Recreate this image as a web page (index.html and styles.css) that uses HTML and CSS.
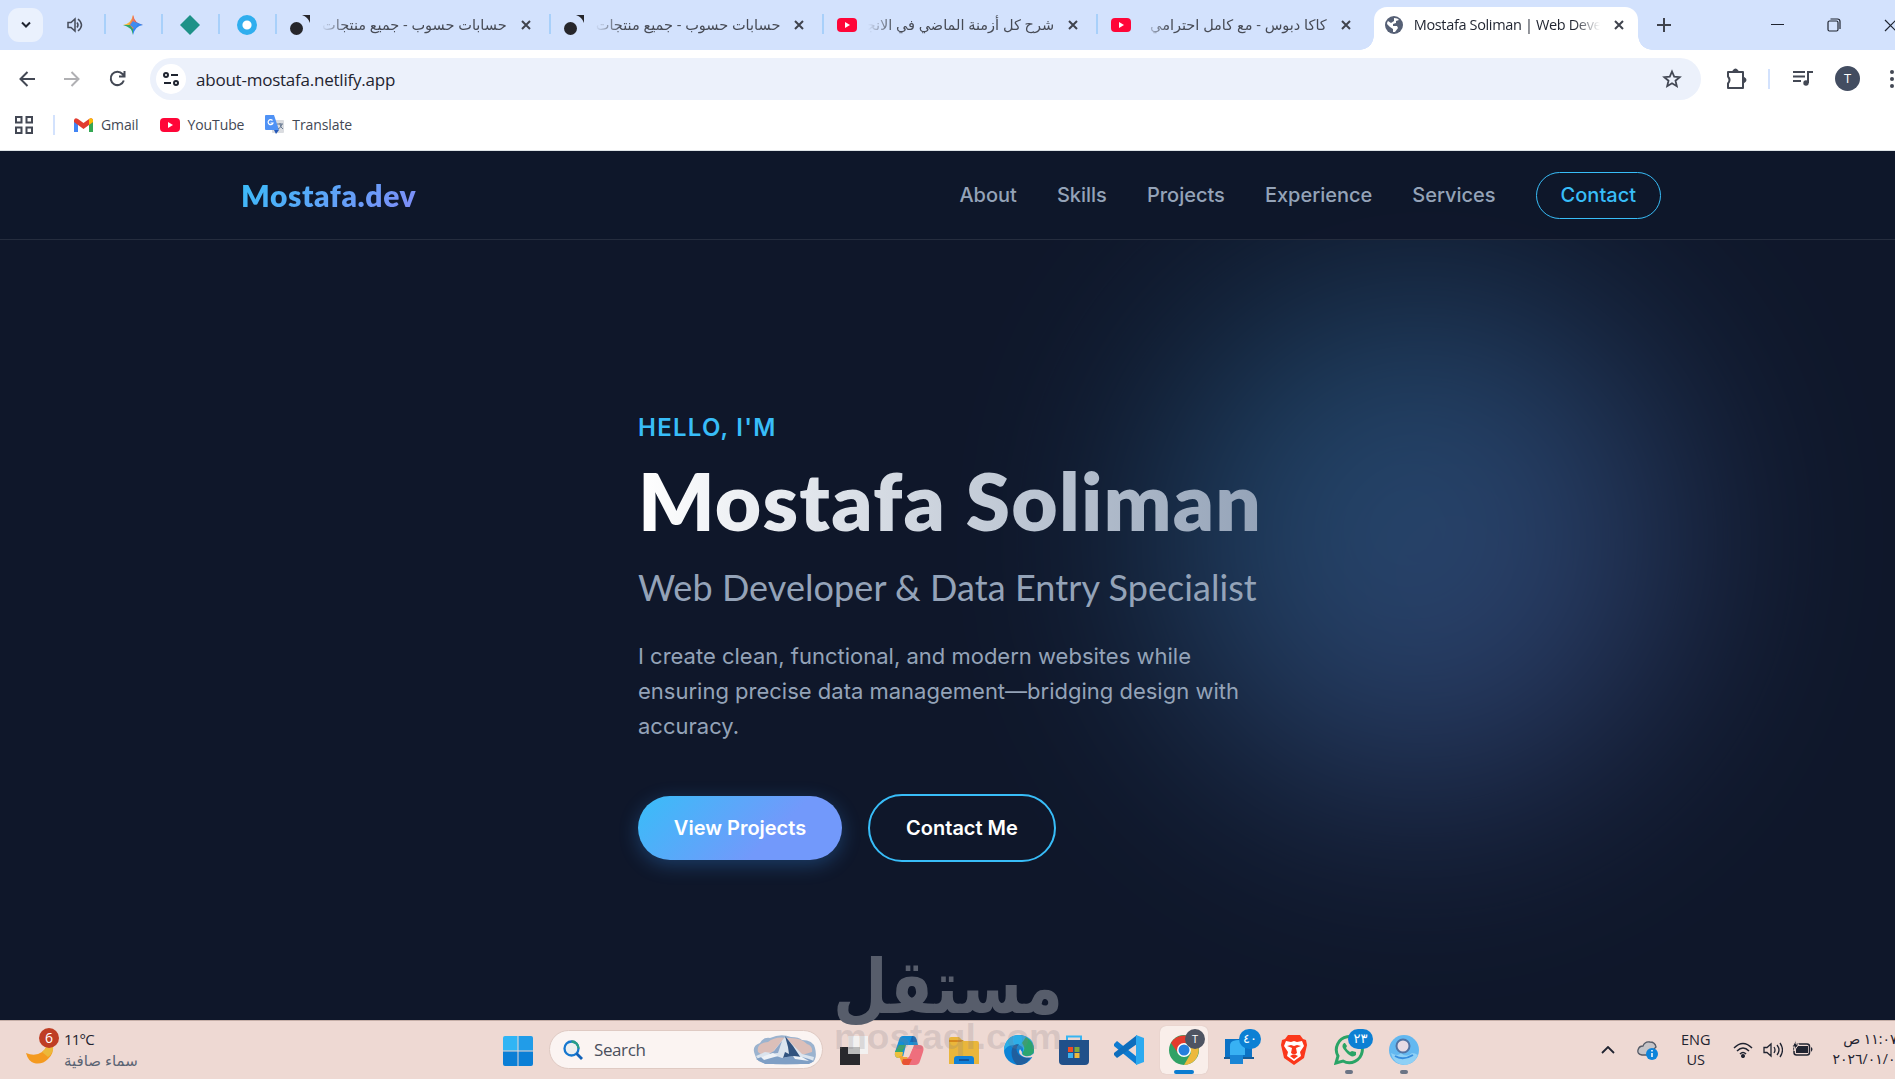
FILE: index.html
```html
<!DOCTYPE html>
<html lang="en">
<head>
    <meta charset="UTF-8">
    <meta name="viewport" content="width=device-width, initial-scale=1.0">
    <title>Mostafa Soliman | Web Developer</title>
    <link rel="stylesheet" href="styles.css">
</head>
<body>

    <!-- Tab strip -->
    <div class="tabs">
        <div class="tab-search"><svg width="12" height="8" viewBox="0 0 12 8"><path d="M2 1.5l4 4 4-4" fill="none" stroke="#1f2430" stroke-width="2"/></svg></div>
        <div class="pinned">
            <svg width="16" height="16" viewBox="0 0 16 16" fill="none" stroke="#474d5b" stroke-width="1.5"><path d="M1 5.5h3l4-3.5v12L4 10.500H1z"/><path d="M10 5.500q2 2.500 0 5M11 2q7 6 0 12"/></svg>
        </div>
        <div class="pinned">
            <svg width="20" height="20" viewBox="0 0 20 20"><path d="M10 0Q11 8 10 10L0 10Q8 9 10 0" fill="#f6b93b"/><path d="M10 0Q12 9 20 10H10z" fill="#ec5a4d"/><path d="M20 10Q12 11 10 20V6z" fill="#3285f0"/><path d="M0 10Q9 12 10 20V10z" fill="#31a66a"/><path d="M10 0Q11 7 14 9l-4 5-4-5q3-2 4-9" fill="#ec7b5c"/><path d="M7 10l3-4 5 3-3 5z" fill="#3f8df0"/></svg>
        </div>
        <div class="pinned">
            <svg width="20" height="20" viewBox="0 0 20 20"><path d="M10 0l10 10-10 10L0 10z" fill="#1e9188"/></svg>
        </div>
        <div class="pinned">
            <svg width="20" height="20" viewBox="0 0 20 20"><circle cx="10" cy="10" r="7.300" fill="#fff" stroke="#30aeee" stroke-width="5.400"/></svg>
        </div>
        <div class="tab">
            <svg class="favicon" width="20" height="20" viewBox="0 0 20 20" fill="#26262b"><circle cx="6.500" cy="13.500" r="6.500"/><path d="M12 0h8v8q-2-6-8-8z"/></svg>
            <span class="tab-title" dir="rtl">حسابات حسوب - جميع منتجات حسوب</span>
            <svg class="close" width="10" height="10" viewBox="0 0 10 10"><path d="M1 1l8 8M9 1L1 9"/></svg>
        </div>
        <div class="tab">
            <svg class="favicon" width="20" height="20" viewBox="0 0 20 20" fill="#26262b"><circle cx="6.500" cy="13.500" r="6.500"/><path d="M12 0h8v8q-2-6-8-8z"/></svg>
            <span class="tab-title" dir="rtl">حسابات حسوب - جميع منتجات حسوب</span>
            <svg class="close" width="10" height="10" viewBox="0 0 10 10"><path d="M1 1l8 8M9 1L1 9"/></svg>
        </div>
        <div class="tab">
            <svg class="favicon" width="20" height="20" viewBox="0 0 20 20"><rect y="3" width="20" height="14" rx="4" fill="#ff0638"/><path d="M8 7l5 3-5 3z" fill="#fff"/></svg>
            <span class="tab-title" dir="rtl">شرح كل أزمنة الماضي في الانجليزي</span>
            <svg class="close" width="10" height="10" viewBox="0 0 10 10"><path d="M1 1l8 8M9 1L1 9"/></svg>
        </div>
        <div class="tab">
            <svg class="favicon" width="20" height="20" viewBox="0 0 20 20"><rect y="3" width="20" height="14" rx="4" fill="#ff0638"/><path d="M8 7l5 3-5 3z" fill="#fff"/></svg>
            <span class="tab-title" dir="rtl">كاكا دبوس - مع كامل احترامي</span>
            <svg class="close" width="10" height="10" viewBox="0 0 10 10"><path d="M1 1l8 8M9 1L1 9"/></svg>
        </div>
        <div class="tab active">
            <svg class="favicon" width="18" height="18" viewBox="0 0 18 18"><circle cx="9" cy="9" r="9" fill="#566075"/><path d="M9 2q4 0 5 2l-3 1v2l-3 1v2h4l1 2-3 4H8v-3L5 11 2 8q0-2 1-3l3 2 3-2z" fill="#fff"/></svg>
            <span class="tab-title">Mostafa Soliman | Web Developer</span>
            <svg class="close" width="10" height="10" viewBox="0 0 10 10"><path d="M1 1l8 8M9 1L1 9"/></svg>
        </div>
        <div class="window-buttons">
            <svg width="14" height="14" viewBox="0 0 14 14" fill="none" stroke="#3f434d" stroke-width="2"><path d="M7 0v14M0 7h14"/></svg>
            <svg width="13" height="13" viewBox="0 0 13 13" fill="none" stroke="#1f2430"><path d="M0 5.500h13"/></svg>
            <svg width="14" height="14" viewBox="0 0 14 14" fill="none" stroke="#1f2430" stroke-width="1.200"><rect x="1" y="3" width="10" height="10" rx="1.500"/><path d="M3.500 1h7q2.500 0 2.500 2.500V11"/></svg>
            <svg width="13" height="13" viewBox="0 0 13 13" fill="none" stroke="#1f2430" stroke-width="1.200"><path d="M1 1l11 11M12 1L1 12"/></svg>
        </div>
    </div>

    <!-- Toolbar -->
    <div class="toolbar">
        <div class="nav-icons">
            <svg width="16" height="16" viewBox="0 0 16 16" fill="none" stroke="#434854" stroke-width="2"><path d="M16 8H2M8.500 1L1.500 8l7 7"/></svg>
            <svg width="16" height="16" viewBox="0 0 16 16" fill="none" stroke="#b0b0b3" stroke-width="2"><path d="M0 8h14M7.500 1l7 7-7 7"/></svg>
            <svg width="17" height="17" viewBox="0 0 17 17" fill="none" stroke="#434854" stroke-width="2"><path d="M14.800 10.500A6.700 6.700 0 1 1 13.500 4L15.500 6M15.500 1v5.500H10"/></svg>
        </div>
        <div class="address">
            <div class="site-info">
                <svg width="16" height="14" viewBox="0 0 16 14" fill="none" stroke="#1f2430" stroke-width="2"><circle cx="3" cy="3" r="2"/><path d="M8 3h7M1 11h7"/><circle cx="13" cy="11" r="2"/></svg>
            </div>
            <span class="url">about-mostafa.netlify.app</span>
            <svg class="star" width="20" height="20" viewBox="0 0 20 20" fill="none" stroke="#434854" stroke-width="1.800"><path d="M10 2.500l2.200 5.100 5.500.5-4.200 3.600 1.300 5.500L10 14.300l-4.800 2.900 1.300-5.500L2.300 8.100l5.500-.5z"/></svg>
        </div>
        <div class="toolbar-right">
            <svg width="22" height="22" viewBox="0 0 22 22" fill="none" stroke="#434854" stroke-width="2"><path d="M3 4h15v16H3v-4.500q3-3.500 0-7z" stroke-linejoin="round"/><path d="M8.500 3q2-3 4 0zM19 10q3 2 0 4z" fill="#434854"/></svg>
            <span class="divider"></span>
            <svg width="20" height="20" viewBox="0 0 20 20" fill="none" stroke="#434854" stroke-width="2"><path d="M0 3h12M0 7.500h12M0 12h8M15 14V3h5"/><circle cx="13" cy="14" r="2.700" fill="#434854" stroke="none"/></svg>
            <span class="avatar">T</span>
            <svg width="4" height="18" viewBox="0 0 4 18" fill="#434854"><circle cx="2" cy="2" r="2"/><circle cx="2" cy="9" r="2"/><circle cx="2" cy="16" r="2"/></svg>
        </div>
    </div>

    <!-- Bookmarks bar -->
    <div class="bookmarks">
        <svg width="18" height="18" viewBox="0 0 18 18" fill="none" stroke="#434854" stroke-width="2"><path d="M1 1h5.500v5.500H1zM11.500 1H17v5.500h-5.500zM1 11.500h5.500V17H1zM11.500 11.500H17V17h-5.500z"/></svg>
        <span class="divider"></span>
        <span class="bookmark gmail">
            <svg width="19" height="14" viewBox="0 0 19 14"><path d="M0 2v12h4V5z" fill="#4285f4"/><path d="M19 2v12h-4V5z" fill="#34a853"/><path d="M0 2q1-3 4-1l5.500 4L15 1q3-2 4 1v2l-9.500 7L0 4z" fill="#e23c30"/><path d="M15 1q3-2 4 1v2l-4 3z" fill="#fbbc04"/></svg>
            Gmail
        </span>
        <span class="bookmark youtube">
            <svg width="20" height="14" viewBox="0 0 20 14"><rect width="20" height="14" rx="4" fill="#ff0638"/><path d="M8 4l5 3-5 3z" fill="#fff"/></svg>
            YouTube
        </span>
        <span class="bookmark">
            <svg width="19" height="19" viewBox="0 0 19 19"><rect x="7" y="5" width="12" height="13" rx="1" fill="#dadce0"/><path d="M1 0h8l5 15H1q-1 0-1-1V1q0-1 1-1z" fill="#4f92f5"/><path d="M9 15h5l-3 4z" fill="#2458b8"/><path d="M7.500 5.500a2.500 2.500 0 1 0 .5 2.500H5.500" fill="none" stroke="#fff" stroke-width="1.200"/><path d="M12 9h6M15 8v1q0 3 3 5M17 9q-1 4-4 5" fill="none" stroke="#697a92" stroke-width="1"/></svg>
            Translate
        </span>
    </div>

    <!-- Website -->
    <div class="page">
        <div class="glow"></div>
        <nav class="navbar">
            <a class="logo">Mostafa.dev</a>
            <div class="nav-links">
                <a>About</a>
                <a>Skills</a>
                <a>Projects</a>
                <a>Experience</a>
                <a>Services</a>
                <a class="nav-contact">Contact</a>
            </div>
        </nav>
        <section class="hero">
            <p class="greeting">HELLO, I'M</p>
            <h1>Mostafa Soliman</h1>
            <h2>Web Developer &amp; Data Entry Specialist</h2>
            <p class="intro">I create clean, functional, and modern websites while ensuring precise data management—bridging design with accuracy.</p>
            <div class="hero-buttons">
                <a class="btn btn-primary">View Projects</a>
                <a class="btn btn-outline">Contact Me</a>
            </div>
        </section>
    </div>

    <!-- Taskbar -->
    <div class="taskbar">
        <div class="weather">
            <div class="moon">
                <svg width="28" height="20" viewBox="0 0 28 20"><path d="M0 8Q9 12 16 7 20 4 21 0h6q1 9-5 14Q16 20 8 18 2 16 0 8z" fill="#f49a20"/><path d="M16 7q4-3 5-7h6q1 8-5 12z" fill="#ecb83a"/></svg>
                <span class="badge badge-red">6</span>
            </div>
            <div class="weather-text">
                <div class="temp">11°C</div>
                <div class="sky" dir="rtl">سماء صافية</div>
            </div>
        </div>

        <div class="apps">
            <svg class="start" width="30" height="30" viewBox="0 0 30 30"><path d="M0 2q0-2 2-2h12.500v14.500H0z" fill="#30b5f5"/><path d="M15.500 0H28q2 0 2 2v12.500H15.500z" fill="#219ce8"/><path d="M0 15.500h14.500V30H2q-2 0-2-2zM15.500 15.500H30V28q0 2-2 2H15.500z" fill="#0b7fd6"/></svg>
            <div class="search">
                <svg width="20" height="20" viewBox="0 0 20 20"><circle cx="8.500" cy="8.500" r="7" fill="#eceeef" stroke="#1677cf" stroke-width="2.300"/><path d="M8.500 1.500a7 7 0 0 1 7 7" fill="none" stroke="#279e85" stroke-width="2.300"/><path d="M13.500 13.500l5.500 5.500" stroke="#1160b7" stroke-width="2.800"/></svg>
                <span>Search</span>
                <svg class="mountain" width="64" height="30" viewBox="0 0 64 30"><path d="M2 20Q-2 11 7 8q3-6 10-5Q28-2 38 2q8 0 11 3 11 0 13 8 3 12-4 15-28 3-45 0Q4 28 2 20z" fill="#9bb3cf"/><path d="M5 17Q3 8 15 7q7-6 19-4 14-1 20 6 6 2 5 8l-10 3H9z" fill="#dcbfb9"/><path d="M3 21l9-4 7 1 13-16 12 12 5 5 12 3-1 4q-25 4-54-1z" fill="#dbe4ee"/><path d="M32 1l3 11 1 7-4-2-2 6q9-3 18 0L40 11z" fill="#31537f"/><path d="M29 6l-8 10-5 3 9-1z" fill="#8da6c8"/><path d="M3 24q16-6 26-1 16-4 32 3l-5 3H12z" fill="#7f9fc5"/><path d="M8 22l12-4 5 3-14 4zM40 21l9 1 7 4-14-2z" fill="#eef2f7"/></svg>
            </div>
            <div class="app">
                <svg width="28" height="29" viewBox="0 0 28 29"><path d="M0 11h20v18H0z" fill="#29292d"/><path d="M8 0h20v18H8z" fill="#f3f3f3" opacity=".9"/><path d="M8 11h12v7H8z" fill="#bbb"/></svg>
            </div>
            <div class="app">
                <svg width="30" height="29" viewBox="0 0 30 29"><path d="M9 0h10q3 0 4 5l1 4h-8L9 22H5Q0 22 1 16L5 4Q6 0 9 0z" fill="#168ed6"/><path d="M5 9h7L8 16H1z" fill="#38a86b"/><path d="M1 16h8l-1 6H5q-5 0-4-6z" fill="#ecc03c"/><path d="M20 9h5q6 0 4 7l-3 9q-1 4-5 4H11q-3 0-4-7h7z" fill="#ee6f7d"/><path d="M5 20h9l-3 9q-3 0-4-4z" fill="#efa43a"/><path d="M12 9h8l-5 12H9z" fill="#eed7d0"/><path d="M18 0q4 0 5 6h-7z" fill="#1769b7"/><path d="M9 23h9l-3 6h-4q-3 0-3-3z" fill="#e85234"/></svg>
            </div>
            <div class="app">
                <svg width="30" height="27" viewBox="0 0 30 27"><path d="M0 2q0-2 2-2h8l4 4H28q2 0 2 2v21H0z" fill="#eab63b"/><path d="M0 5h12l3-2H0z" fill="#d7881c"/><path d="M5 27v-5q0-3 3-3h14q3 0 3 3v5z" fill="#1080d7"/><path d="M10 23h10" stroke="#10559c" stroke-width="2"/></svg>
            </div>
            <div class="app">
                <svg width="30" height="30" viewBox="0 0 30 30"><circle cx="15" cy="15" r="15" fill="#0c83d6"/><path d="M0 13Q3 0 15 0q15 1 15 14 0 5-5 7-6 1-7-2 4-9-6-9Q3 9 0 16z" fill="#2caee7"/><path d="M22 2q8 5 8 13 0 6-8 6-5-1-3-4 3-4-1-9z" fill="#2ca56e"/><path d="M8 14q1-5 7-5-5 5 0 11 5 4 12 2-5 9-14 8-7-7-5-16z" fill="#205f9e"/><path d="M16 14q-3 5 4 8 5 1 8 0l3 0v-4l-2 1q-3 3-8 2-4-1-3-4z" fill="#eed8d1"/></svg>
            </div>
            <div class="app">
                <svg width="30" height="30" viewBox="0 0 30 30"><path d="M8 5V1.500h14V5" fill="none" stroke="#38b5f2" stroke-width="2"/><path d="M0 5h30v21q0 4-4 4H4q-4 0-4-4z" fill="#20508a"/><path d="M9 12h5v5H9z" fill="#ee4d24"/><path d="M15.500 12h5v5h-5z" fill="#7ea93b"/><path d="M9 18h5v5H9z" fill="#3bb2ee"/><path d="M15.500 18h5v5h-5z" fill="#eeb93b"/></svg>
            </div>
            <div class="app">
                <svg width="30" height="30" viewBox="0 0 30 30"><path d="M0 9l3-3 20 16v8L0 11z" fill="#0d7bd1"/><path d="M0 20l3 3L23 9V0L0 18z" fill="#0d6ebd"/><path d="M22 0l8 3v24l-8 3z" fill="#2caaf0"/></svg>
            </div>
            <div class="app app-active">
                <svg width="30" height="30" viewBox="0 0 30 30"><circle cx="15" cy="15" r="15" fill="#30a265"/><path d="M2 8A15 15 0 0 1 28 8H15L9 18z" fill="#e43a2d"/><path d="M28 8a15 15 0 0 1-13 22l7-12-1-10z" fill="#ecb93d"/><circle cx="15" cy="15" r="7" fill="#fff"/><circle cx="15" cy="15" r="5.500" fill="#257fdd"/></svg>
                <span class="badge badge-grey">T</span>
                <span class="running running-active"></span>
            </div>
            <div class="app">
                <svg width="30" height="27" viewBox="0 0 30 27"><path d="M1 2h27v18H1z" fill="#0b72c5"/><path d="M0 20h30v2H0z" fill="#175b95"/><path d="M6 7h13v20H6z" fill="#1985d5"/><path d="M9 4q8-3 12 2v12H6V9q0-4 3-5z" fill="#38b1f3"/></svg>
                <span class="badge badge-blue">٤٠</span>
            </div>
            <div class="app">
                <svg width="26" height="30" viewBox="0 0 26 30"><path d="M7 0h12l3 4 3 1 1 5-3 13-10 7-10-7L0 10l1-5 3-1z" fill="#fb371b"/><path d="M5 6l5 1 3-1 3 1 5-1 2 5-4 6 1 4-7 5-7-5 1-4-4-6z" fill="#fff"/><path d="M6 11l5 2-1 5 3 2 3-2-1-5 5-2-4-1-3 1-3-1zM9 21l4-2 4 2-4 3z" fill="#fb371b"/></svg>
            </div>
            <div class="app">
                <svg width="30" height="30" viewBox="0 0 30 30"><path d="M2 28l2-7A13 13 0 1 1 9 26z" fill="none" stroke="#2aa466" stroke-width="3"/><path d="M10 8q-4 3 2 9 6 7 10 3v-3l-4-1-2 1q-3-2-4-4l1-2-2-3z" fill="#2aa466"/></svg>
                <span class="badge badge-blue badge-wide">٢٣</span>
                <span class="running"></span>
            </div>
            <div class="app">
                <svg width="30" height="30" viewBox="0 0 30 30"><circle cx="15" cy="15" r="15" fill="#63b8f0"/><path d="M2 18q7 4 10 0 5 5 11 0 3 0 6 2-4 9-13 10Q4 29 2 18z" fill="#8fd0f5"/><circle cx="14" cy="11" r="6.500" fill="#e7dbe4" stroke="#5173a3" stroke-width="2"/><path d="M6 21q8 5 18-1" fill="none" stroke="#368dde" stroke-width="2"/></svg>
                <span class="running"></span>
            </div>
        </div>

        <div class="tray">
            <svg width="14" height="8" viewBox="0 0 14 8" fill="none" stroke="#202431" stroke-width="1.800"><path d="M1 7l6-6 6 6"/></svg>
            <svg class="cloud" width="22" height="19" viewBox="0 0 22 19"><path d="M5 14Q0 13 1 9q1-4 5-4 2-5 7-4 5 0 6 5l-8 8z" fill="#c5c4c8" stroke="#555b67" stroke-width="1.300"/><circle cx="15" cy="13" r="6" fill="#0c84db"/><path d="M15 12v4M15 9v1.500" stroke="#fff" stroke-width="1.500"/></svg>
            <div class="lang"><div>ENG</div><div>US</div></div>
            <svg class="wifi" width="20" height="16" viewBox="0 0 20 16" fill="none" stroke="#202431" stroke-width="1.500"><path d="M1 6Q10-3 19 6M4 9q6-6 12 0M7 12q3-3 6 0"/><circle cx="10" cy="14" r="1.300" fill="#202431"/></svg>
            <svg class="speaker" width="20" height="16" viewBox="0 0 20 16" fill="none" stroke="#202431" stroke-width="1.300"><path d="M1 5.500h3L8 2v12l-4-3.500H1zM11 5q2 3 0 6M14 3q4 5 0 10M17 1q5 7 0 14"/></svg>
            <svg class="battery" width="21" height="16" viewBox="0 0 21 16"><rect x="2" y="4" width="15.500" height="11" rx="2.500" fill="none" stroke="#202431" stroke-width="1.500"/><path d="M4 6h12v7H4zM19 7q3 2 0 5z" fill="#202431"/><path d="M4 0L0 7h3l-1 4 5-7H4z" fill="#202431" stroke="#eed9d3"/></svg>
            <div class="clock"><div dir="rtl">١١:٠٧ ص</div><div class="date">٢٠٢٦/٠١/٠٤</div></div>
        </div>
    </div>

    <!-- Watermark -->
    <div class="watermark">
        <svg width="230" height="130" viewBox="0 0 230 130">
            <text class="mark-ar" x="114" y="64" text-anchor="middle" textLength="230" lengthAdjust="spacingAndGlyphs">مستقل</text>
            <text class="mark-en" x="0" y="100" textLength="228" lengthAdjust="spacingAndGlyphs">mostaql.com</text>
        </svg>
    </div>

</body>
</html>
```
FILE: styles.css
```css
* { box-sizing: border-box; }
body { margin: 0; width: 1895px; height: 1079px; overflow: hidden; background: #fff; font-family: "Open Sans", "Noto Sans", "DejaVu Sans", sans-serif; color: #1f2430; }
svg { display: block; flex: none; }

/* Tab strip */
.tabs { display: flex; height: 50px; background: #d3e2fd; overflow: hidden; }
.tab-search { width: 35px; height: 34px; margin: 8px 17px 0 8px; border-radius: 11px; background: #eaf1fd; display: flex; align-items: center; justify-content: center; flex: none; }
.pinned { width: 57px; height: 50px; padding-right: 3px; display: flex; align-items: center; justify-content: center; flex: none; background: linear-gradient(#a8d0fa, #a8d0fa) right 14px / 2px 20px no-repeat; }
.pinned:nth-child(2) { width: 46px; padding-right: 16px; }
.tab { width: 273.7px; height: 50px; padding: 0 20px 0 13px; display: flex; align-items: center; flex: none; background: linear-gradient(#a8d0fa, #a8d0fa) right 14px / 2px 20px no-repeat; }
.tab:nth-child(9) { background: none; padding-right: 21px; }
.tab-title { flex: 1; margin: 0 14px 0 11px; overflow: hidden; white-space: nowrap; font-size: 14.5px; line-height: 26px; color: #474b55; -webkit-mask-image: linear-gradient(to right, transparent, #000 26px); mask-image: linear-gradient(to right, transparent, #000 26px); }
.close { stroke: #3f434d; stroke-width: 2; fill: none; }
.tab.active { width: 264px; height: 43px; margin: 7px 0 0 2px; padding: 0 14px 7px 11px; background: #fff; border-radius: 13px 13px 0 0; position: relative; }
.tab.active .tab-title { color: #1f2430; font-size: 14.5px; letter-spacing: -.35px; margin-left: 11px; -webkit-mask-image: linear-gradient(to left, transparent, #000 26px); mask-image: linear-gradient(to left, transparent, #000 26px); }
.tab.active::before, .tab.active::after { content: ""; position: absolute; bottom: 0; width: 14px; height: 14px; }
.tab.active::before { left: -14px; background: radial-gradient(circle at 0 0, transparent 13.500px, #fff 14px); }
.tab.active::after { right: -14px; background: radial-gradient(circle at 100% 0, transparent 13.500px, #fff 14px); }
.window-buttons { display: flex; align-items: center; padding-left: 19px; flex: none; }
.window-buttons svg:nth-child(2) { margin-left: 100px; }
.window-buttons svg:nth-child(3) { margin-left: 43px; }
.window-buttons svg:nth-child(4) { margin-left: 43px; }

/* Toolbar */
.toolbar { display: flex; align-items: center; height: 58px; overflow: hidden; }
.nav-icons { display: flex; align-items: center; gap: 29px; width: 150px; padding: 0 0 1px 19px; flex: none; }
.address { display: flex; align-items: center; width: 1551px; height: 42px; padding: 0 19px 0 6px; background: #ecf1fb; border-radius: 21px; flex: none; }
.site-info { width: 30px; height: 30px; border-radius: 50%; background: #fff; display: flex; align-items: center; justify-content: center; }
.url { flex: 1; margin-left: 10px; font-size: 17px; letter-spacing: -.23px; }
.toolbar-right { display: flex; align-items: center; flex: none; padding: 0 0 1px 24px; }
.divider { width: 2px; height: 20px; background: #d3e2fd; flex: none; }
.toolbar-right .divider { margin: 0 23px 0 21px; }
.avatar { width: 25px; height: 25px; margin: 0 30px 0 22px; border-radius: 50%; background: #434d61; color: #fff; font-size: 13px; line-height: 25px; text-align: center; }
.bookmarks { display: flex; align-items: center; height: 43px; padding: 0 0 9px 15px; border-bottom: 1px solid #dde3e6; font-size: 14px; color: #434854; }
.bookmarks .divider { margin: 0 19px 0 20px; }
.bookmark { display: flex; align-items: center; gap: 8px; margin-right: 21px; letter-spacing: -.1px; }

/* Website */
.page { position: relative; height: 869px; background: #0f172a; overflow: hidden; font-family: Inter, sans-serif; }
.glow { position: absolute; left: 1165px; top: 134px; width: 510px; height: 510px; border-radius: 50%; background: linear-gradient(135deg, #38bdf8, #818cf8); opacity: .31; filter: blur(112px); }
.navbar { position: relative; display: flex; align-items: center; justify-content: space-between; height: 89px; padding: 0 234px 0 241px; background: #0f172af2; border-bottom: 1px solid #252d3e; }
.logo { font-family: Lato, sans-serif; font-weight: 800; font-size: 30px; letter-spacing: .6px; background: linear-gradient(135deg, #38bdf8, #818cf8); -webkit-background-clip: text; background-clip: text; color: transparent; }
.nav-links { display: flex; align-items: center; gap: 40px; font-size: 20px; font-weight: 500; color: #94a3b8; }
.nav-contact { height: 47px; padding: 0 24px; border: 1px solid #38bdf8; border-radius: 24px; line-height: 44px; color: #38bdf8; }
.hero { position: relative; width: 660px; margin-left: 638px; padding-top: 169px; }
.greeting { margin: 0; font-size: 24px; font-weight: 600; line-height: 38px; letter-spacing: 1.25px; color: #38bdf8; }
h1 { margin: 5px 0 0; width: max-content; font-family: Lato, sans-serif; font-size: 80px; font-weight: 800; line-height: 96px; letter-spacing: 1.2px; background: linear-gradient(to right, #fff, #94a3b8); -webkit-background-clip: text; background-clip: text; color: transparent; }
h2 { margin: 17px 0 0; font-family: Lato, sans-serif; font-size: 36px; font-weight: 400; line-height: 44px; letter-spacing: .07px; color: #94a3b8; white-space: nowrap; }
.intro { margin: 30px 0 0; width: 625px; font-size: 22px; line-height: 35px; color: #94a3b8; }
.hero-buttons { display: flex; align-items: center; gap: 26px; margin-top: 50px; }
.btn { display: flex; align-items: center; justify-content: center; font-size: 20px; font-weight: 600; color: #fff; border-radius: 40px; }
.btn-primary { width: 204px; height: 64px; background: linear-gradient(135deg, #38bdf8, #7299fb 65%); box-shadow: 0 5px 19px rgba(56, 149, 248, .3); }
.btn-outline { width: 188px; height: 68px; border: 2px solid #38bdf8; }

/* Taskbar */
.taskbar { display: flex; height: 59px; background: #eed9d3; border-top: 1px solid #c5afa8; font-size: 14.5px; overflow: hidden; }
.weather { display: flex; width: 503px; flex: none; padding: 8px 0 0 26px; }
.moon { position: relative; width: 38px; padding-top: 16px; }
.weather-text { line-height: 21px; }
.temp { letter-spacing: -.8px; font-size: 15px; }
.sky { font-size: 15px; color: #5b6473; }
.badge { position: absolute; height: 20px; min-width: 20px; border-radius: 10px; color: #fff; font-size: 14px; line-height: 19px; text-align: center; }
.badge-red { background: #bf3d24; left: 13px; top: -1px; }
.badge-blue { background: #0c80d4; right: 2px; top: 3px; width: 22px; font-size: 13px; }
.badge-wide { width: 25px; right: 0; }
.badge-grey { background: #4e5462; right: 3px; top: 3px; font-size: 11px; }
.apps { display: flex; width: 1098px; flex: none; }
.start { margin: 15px 0 0; }
.search { display: flex; align-items: center; width: 274px; height: 39px; margin: 9px 7px 0 16px; padding: 0 5px 0 13px; border-radius: 20px; background: #fbf4f2; border: 1px solid #dfcac3; font-size: 17px; color: #4a4f5c; }
.search span { flex: 1; margin-left: 11px; letter-spacing: -.4px; }
.app { position: relative; display: flex; align-items: center; justify-content: center; width: 48px; height: 48px; margin: 5px 7px 0 0; }
.app-active { background: #f9eeea; border-radius: 6px; box-shadow: 0 0 1px #c9b3ac; }
.running { position: absolute; bottom: 0; left: 20px; width: 8px; height: 4px; border-radius: 2px; background: #6b7485; }
.running-active { left: 14px; width: 20px; background: #0c7cd0; }
.tray { display: flex; align-items: flex-start; flex: none; width: 294px; overflow: hidden; }
.tray > svg { margin-top: 25px; }
.tray .cloud { margin: 20px 0 0 22px; }
.lang { width: 40px; margin: 9px 0 0 22px; line-height: 20px; text-align: center; }
.tray .wifi { margin: 21px 0 0 22px; }
.tray .speaker { margin: 21px 0 0 10px; }
.tray .battery { margin: 19px 0 0 9px; }
.clock { width: 90px; margin: 8px 0 0 20px; flex: none; line-height: 20px; font-size: 14px; white-space: nowrap; }
.clock div:first-child { width: 65px; }

/* Watermark */
.watermark { position: absolute; left: 834px; top: 949px; }
.mark-ar { font-family: "DejaVu Sans", sans-serif; font-weight: 700; font-size: 75px; fill: #575d6b; }
.mark-en { font-family: "Liberation Sans", sans-serif; font-weight: 700; font-size: 35px; fill: #857f87; fill-opacity: .22; }
```
